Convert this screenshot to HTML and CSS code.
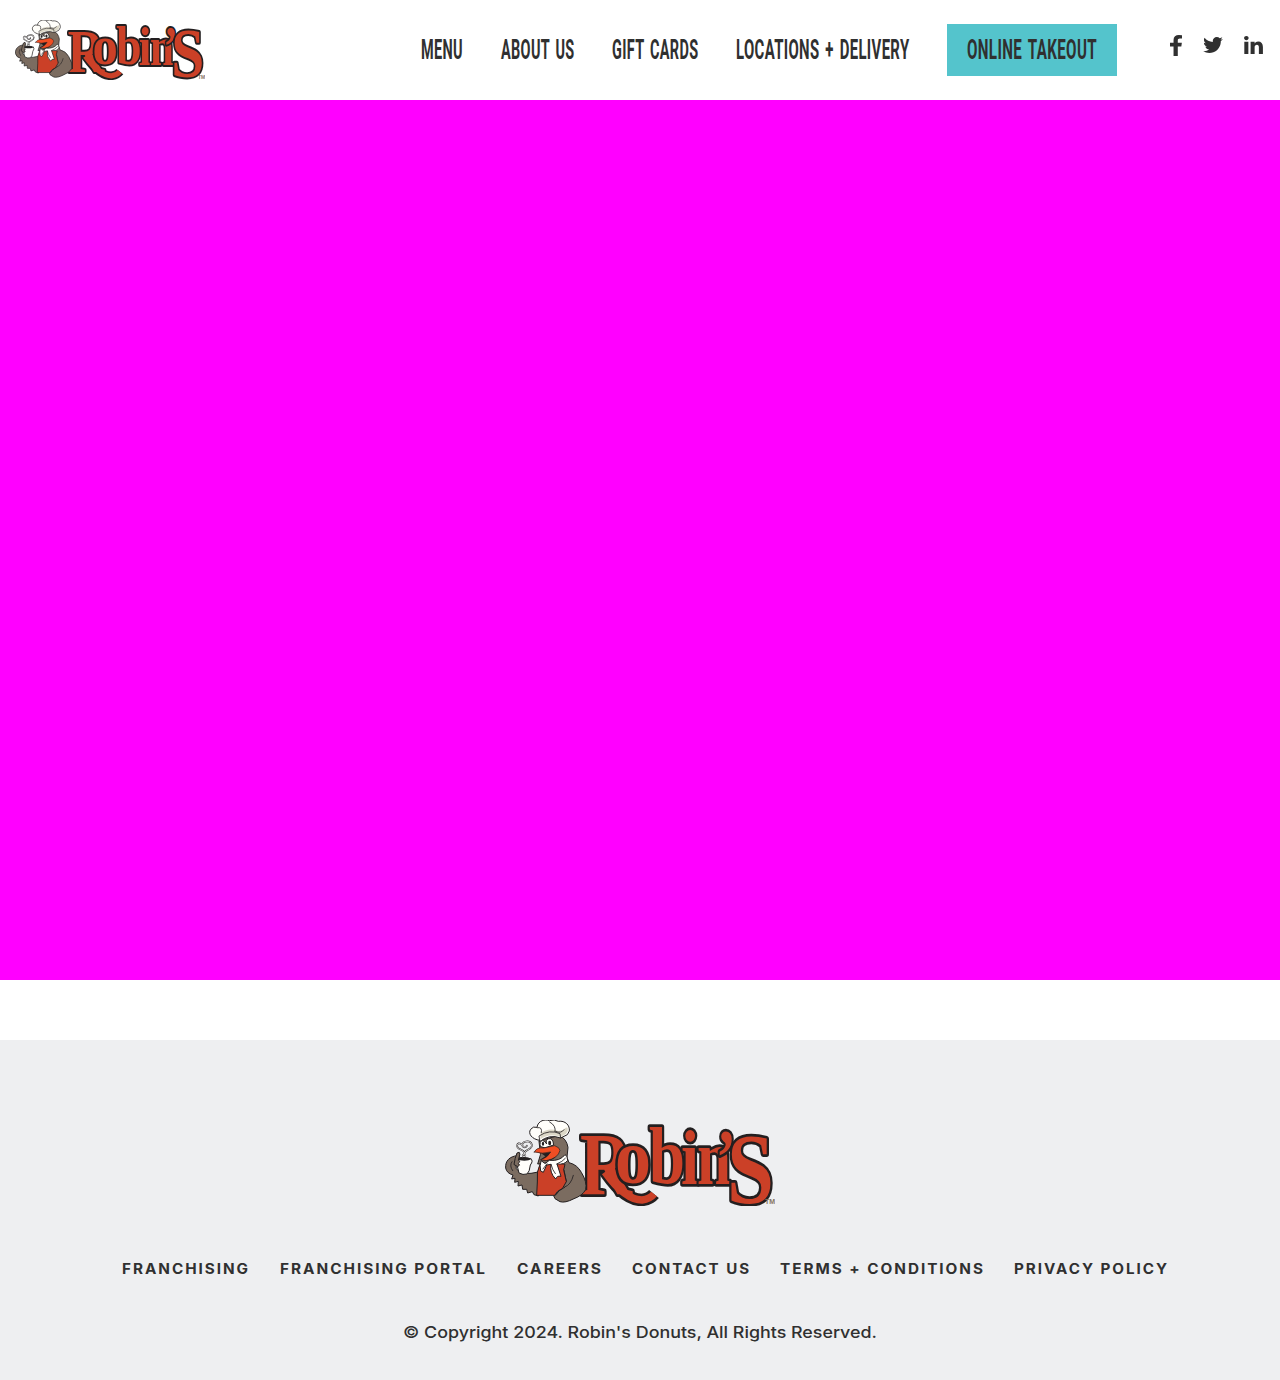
FILE: index.html
```html
<!DOCTYPE html>
<html lang="en">
<head>
<meta charset="utf-8">
<title>Robin's Donuts</title>
<link rel="stylesheet" href="styles.css">
</head>
<body>
<svg class="defs" aria-hidden="true">
  <defs>
    <symbol id="logo" viewBox="0 0 270 86" preserveAspectRatio="none">
      <path class="swash-edge" d="M97 47C108 64 121 80 137 80Q145 79 149 74"/>
      <text class="wordmark"><tspan x="75" y="74" font-size="88" textLength="52" lengthAdjust="spacingAndGlyphs">R</tspan><tspan x="110" y="63" font-size="78" textLength="36" lengthAdjust="spacingAndGlyphs">o</tspan><tspan x="144" y="63" font-size="80" textLength="36" lengthAdjust="spacingAndGlyphs">b</tspan><tspan x="176" y="64" font-size="78" textLength="18" lengthAdjust="spacingAndGlyphs">i</tspan><tspan x="192" y="64" font-size="78" textLength="34" lengthAdjust="spacingAndGlyphs">n</tspan><tspan x="211" y="63" font-size="78" textLength="20" lengthAdjust="spacingAndGlyphs">’</tspan><tspan x="222" y="82" font-size="100" textLength="47" lengthAdjust="spacingAndGlyphs">S</tspan></text>
      <path class="swash" d="M100 52C110 66 123 80 137 80Q145 79 149 74"/>
      <text x="260" y="84" class="tm">TM</text>
      <g transform="scale(.33333) translate(-30 -30)" class="bird">
        <path class="brown" d="M66 137C44 139 30 153 32 174Q35 190 54 195L50 207L60 205L59 217L70 214L69 228L81 225L83 238L95 238L98 249L112 245L117 254L130 258L135 185L108 190L78 190L64 176L62 151L73 146L72 127Z"/>
        <path class="brown" d="M133 92L193 76Q215 87 219 112L216 142L222 158Q247 164 259 187Q277 216 272 239Q262 257 237 266Q210 280 195 275L180 266L176 257L190 246L197 232L214 215L207 180L185 160L128 162L136 135Z"/>
        <path class="red" d="M136 160Q123 185 127 216L125 256H179Q184 243 202 236L214 215L206 180L210 163Q192 156 165 159Z"/>
        <path class="white" d="M134 91C110 88 98 70 107 58Q114 48 126 52C129 31 151 27 163 32Q179 27 190 34C211 31 225 46 223 63Q219 77 207 79L197 84Q163 71 134 95Z"/>
        <path class="shade" d="M137 70Q160 52 190 63L205 60Q214 50 218 54Q221 69 206 76L197 81Q164 68 136 88Z"/>
        <path class="line" d="M127 53Q143 50 139 68M164 36Q184 47 180 65M182 64Q198 72 207 59M134 90L132 78Q164 57 195 71L197 83"/>
        <path class="white" d="M136 109Q132 95 142 91Q151 93 155 102Q150 90 161 86Q174 83 176 105L151 113Z"/>
        <ellipse class="black" cx="144" cy="101" rx="3.500" ry="6"/><ellipse class="black" cx="164" cy="99" rx="4.500" ry="7"/>
        <path class="black" d="M134 127L187 113L193 121Q185 149 157 153L135 150L151 139Z"/>
        <path class="beak" d="M118 126Q125 111 147 114L179 107Q194 112 195 121Q190 145 153 152L137 149Q158 143 167 126Q143 133 118 126Z"/>
        <path class="white" d="M138 153Q133 167 137 183L145 187L155 165L168 163Q163 188 182 207Q186 196 198 199L186 162Q209 165 218 151Q218 137 210 134Q195 154 163 151L151 160Z"/>
        <path class="line" d="M168 163Q172 180 181 191M185 162Q203 155 211 145M156 161L144 177"/>
        <path class="white" d="M108 147Q116 152 106 165Q104 186 96 192Q84 196 72 189Q66 173 66 147Q79 137 108 147Z"/>
        <ellipse class="black" cx="88" cy="147" rx="18" ry="5"/>
        <path class="brown" d="M61 144L66 129Q73 124 75 132L70 151Q78 152 70 160Q78 166 68 170L58 164Z"/>
        <path class="steam-edge" d="M83 137C101 119 66 122 66 107Q68 95 80 104M91 137C79 119 112 121 111 105Q106 90 88 96Q77 103 85 111Q93 114 96 107"/>
        <path class="steam" d="M83 137C101 119 66 122 66 107Q68 95 80 104M91 137C79 119 112 121 111 105Q106 90 88 96Q77 103 85 111Q93 114 96 107"/>
        <path class="line" d="M209 232Q190 239 181 256M235 196Q228 225 209 231M51 155Q42 167 53 182"/>
      </g>
    </symbol>
  </defs>
</svg>

<header class="site-header">
  <a class="brand" href="#"><svg class="header-logo" role="img" aria-label="Robin's"><use href="#logo"/></svg></a>
  <nav class="main-nav">
    <a href="#"><svg width="42" height="30"><text x="0" y="14.700" textLength="42" lengthAdjust="spacingAndGlyphs">MENU</text></svg></a>
    <a href="#"><svg width="73" height="30"><text x="0" y="14.700" textLength="73.500" lengthAdjust="spacingAndGlyphs">ABOUT US</text></svg></a>
    <a href="#"><svg width="86" height="30"><text x="0" y="14.700" textLength="86.500" lengthAdjust="spacingAndGlyphs">GIFT CARDS</text></svg></a>
    <a href="#"><svg width="173" height="30"><text x="0" y="14.700" textLength="173.500" lengthAdjust="spacingAndGlyphs">LOCATIONS + DELIVERY</text></svg></a>
    <a href="#" class="takeout"><svg width="130" height="30"><text x="0" y="14.700" textLength="130" lengthAdjust="spacingAndGlyphs">ONLINE TAKEOUT</text></svg></a>
  </nav>
  <div class="social">
    <a href="#" aria-label="Facebook"><svg width="12" height="21" viewBox="479 0 864 1664" preserveAspectRatio="none"><path d="M1343 12v264h-157q-86 0-116 36t-30 108v189h293l-39 296h-254v759h-306v-759h-255v-296h255v-218q0-186 104-288.500t277-102.500q147 0 228 12z"/></svg></a>
    <a href="#" aria-label="Twitter"><svg width="20" height="16" viewBox="108 256 1576 1280"><path d="M1684 408q-67 98-162 167 1 14 1 42 0 130-38 259.500t-115.500 248.500-184.500 210.500-258 146-323 54.500q-271 0-496-145 35 4 78 4 225 0 401-138-105-2-188-64.500t-114-159.500q33 5 61 5 43 0 85-11-112-23-185.500-111.500t-73.500-205.500v-4q68 38 146 41-66-44-105-115t-39-154q0-88 44-163 121 149 294.500 238.500t371.500 99.500q-8-38-8-74 0-134 94.500-228.500t228.500-94.500q140 0 236 102 109-21 205-78-37 115-142 178 93-10 186-50z"/></svg></a>
    <a href="#" aria-label="LinkedIn"><svg width="19" height="18" viewBox="128 148 1536 1468"><path d="M477 625v991h-330v-991h330zm21-306q1 73-50.500 122t-135.500 49h-2q-82 0-132-49t-50-122q0-74 51.500-122.500t134.500-48.500 133 48.500 51 122.500zm1166 729v568h-329v-530q0-105-40.500-164.500t-126.500-59.500q-63 0-105.500 34.500t-63.500 85.500q-11 30-11 81v553h-329q2-399 2-647t-1-296l-1-48h329v144h-2q20-32 41-56t56.500-52 87-43.500 114.500-15.500q171 0 275 113.500t104 332.500z"/></svg></a>
  </div>
</header>

<main class="hero"></main>

<footer class="site-footer">
  <svg class="footer-logo" role="img" aria-label="Robin's"><use href="#logo"/></svg>
  <nav class="footer-nav">
    <a href="#"><svg width="128" height="20"><text x="0" y="15" textLength="128" lengthAdjust="spacingAndGlyphs">FRANCHISING</text></svg></a>
    <a href="#"><svg width="207" height="20"><text x="0" y="15" textLength="207" lengthAdjust="spacingAndGlyphs">FRANCHISING PORTAL</text></svg></a>
    <a href="#"><svg width="85" height="20"><text x="0" y="15" textLength="86" lengthAdjust="spacingAndGlyphs">CAREERS</text></svg></a>
    <a href="#"><svg width="118" height="20"><text x="0" y="15" textLength="119" lengthAdjust="spacingAndGlyphs">CONTACT US</text></svg></a>
    <a href="#"><svg width="204" height="20"><text x="0" y="15" textLength="205" lengthAdjust="spacingAndGlyphs">TERMS + CONDITIONS</text></svg></a>
    <a href="#"><svg width="155" height="20"><text x="0" y="15" textLength="155" lengthAdjust="spacingAndGlyphs">PRIVACY POLICY</text></svg></a>
  </nav>
  <svg class="copyright" width="474" height="26"><text x="0" y="18" textLength="474" lengthAdjust="spacingAndGlyphs">© Copyright 2024. Robin's Donuts, All Rights Reserved.</text></svg>
</footer>
</body>
</html>
```
FILE: styles.css
```css
* { box-sizing: border-box; }
body { margin: 0; background: #fff; font-family: Inter, "Liberation Sans", sans-serif; color: #303030; }
a { color: inherit; text-decoration: none; }
svg { display: block; overflow: visible; fill: #303030; }
.defs { position: absolute; width: 0; height: 0; }

.site-header { height: 100px; display: flex; align-items: flex-start; padding: 0 17px 0 15px; }
.brand { margin-top: 20px; }
.header-logo { width: 190px; height: 60px; }
.main-nav { display: flex; align-items: center; gap: 38px; height: 100px; margin-left: auto; font: 700 16.4px Roboto, "Liberation Sans", sans-serif; letter-spacing: 0.4px; word-spacing: 2px; }
.main-nav text { transform: scaleY(1.63); }
.takeout { display: flex; align-items: center; height: 52px; width: 170px; padding-left: 20px; background: #54c4cc; }
.social { display: flex; align-items: center; gap: 21px; height: 90px; margin-left: 53px; }

.hero { height: 880px; background: #f0f; }

.site-footer { display: flex; flex-direction: column; align-items: center; height: 340px; margin-top: 60px; padding-top: 80px; background: #eeeff1; }
.footer-logo { width: 270px; height: 86px; }
.footer-nav { display: flex; gap: 30px; margin: 53px 0 0 11px; font-size: 14px; font-weight: 700; letter-spacing: 1.8px; }
.copyright { margin-top: 41px; font-size: 16.4px; font-weight: 500; }

.wordmark { font-family: "Liberation Serif", serif; font-weight: 700; fill: #cb4027; stroke: #231f20; stroke-width: 5.5; stroke-linejoin: round; paint-order: stroke; }
.swash-edge { fill: none; stroke: #231f20; stroke-width: 12.5; }
.swash { fill: none; stroke: #cb4027; stroke-width: 7.5; }
.tm { font: 700 7px "Liberation Sans", sans-serif; fill: #84735f; }

.bird { stroke: #231f20; stroke-width: 3; stroke-linejoin: round; stroke-linecap: round; }
.brown { fill: #7b6c60; }
.red { fill: #cb4027; }
.white { fill: #fffefa; }
.shade { fill: #dcd8c8; stroke: none; }
.black { fill: #231f20; stroke: none; }
.beak { fill: #f04e23; stroke-width: 2; }
.line { fill: none; stroke-width: 2.5; }
.steam-edge { fill: none; stroke-width: 5; }
.steam { fill: none; stroke: #fff; stroke-width: 2.4; }
```
